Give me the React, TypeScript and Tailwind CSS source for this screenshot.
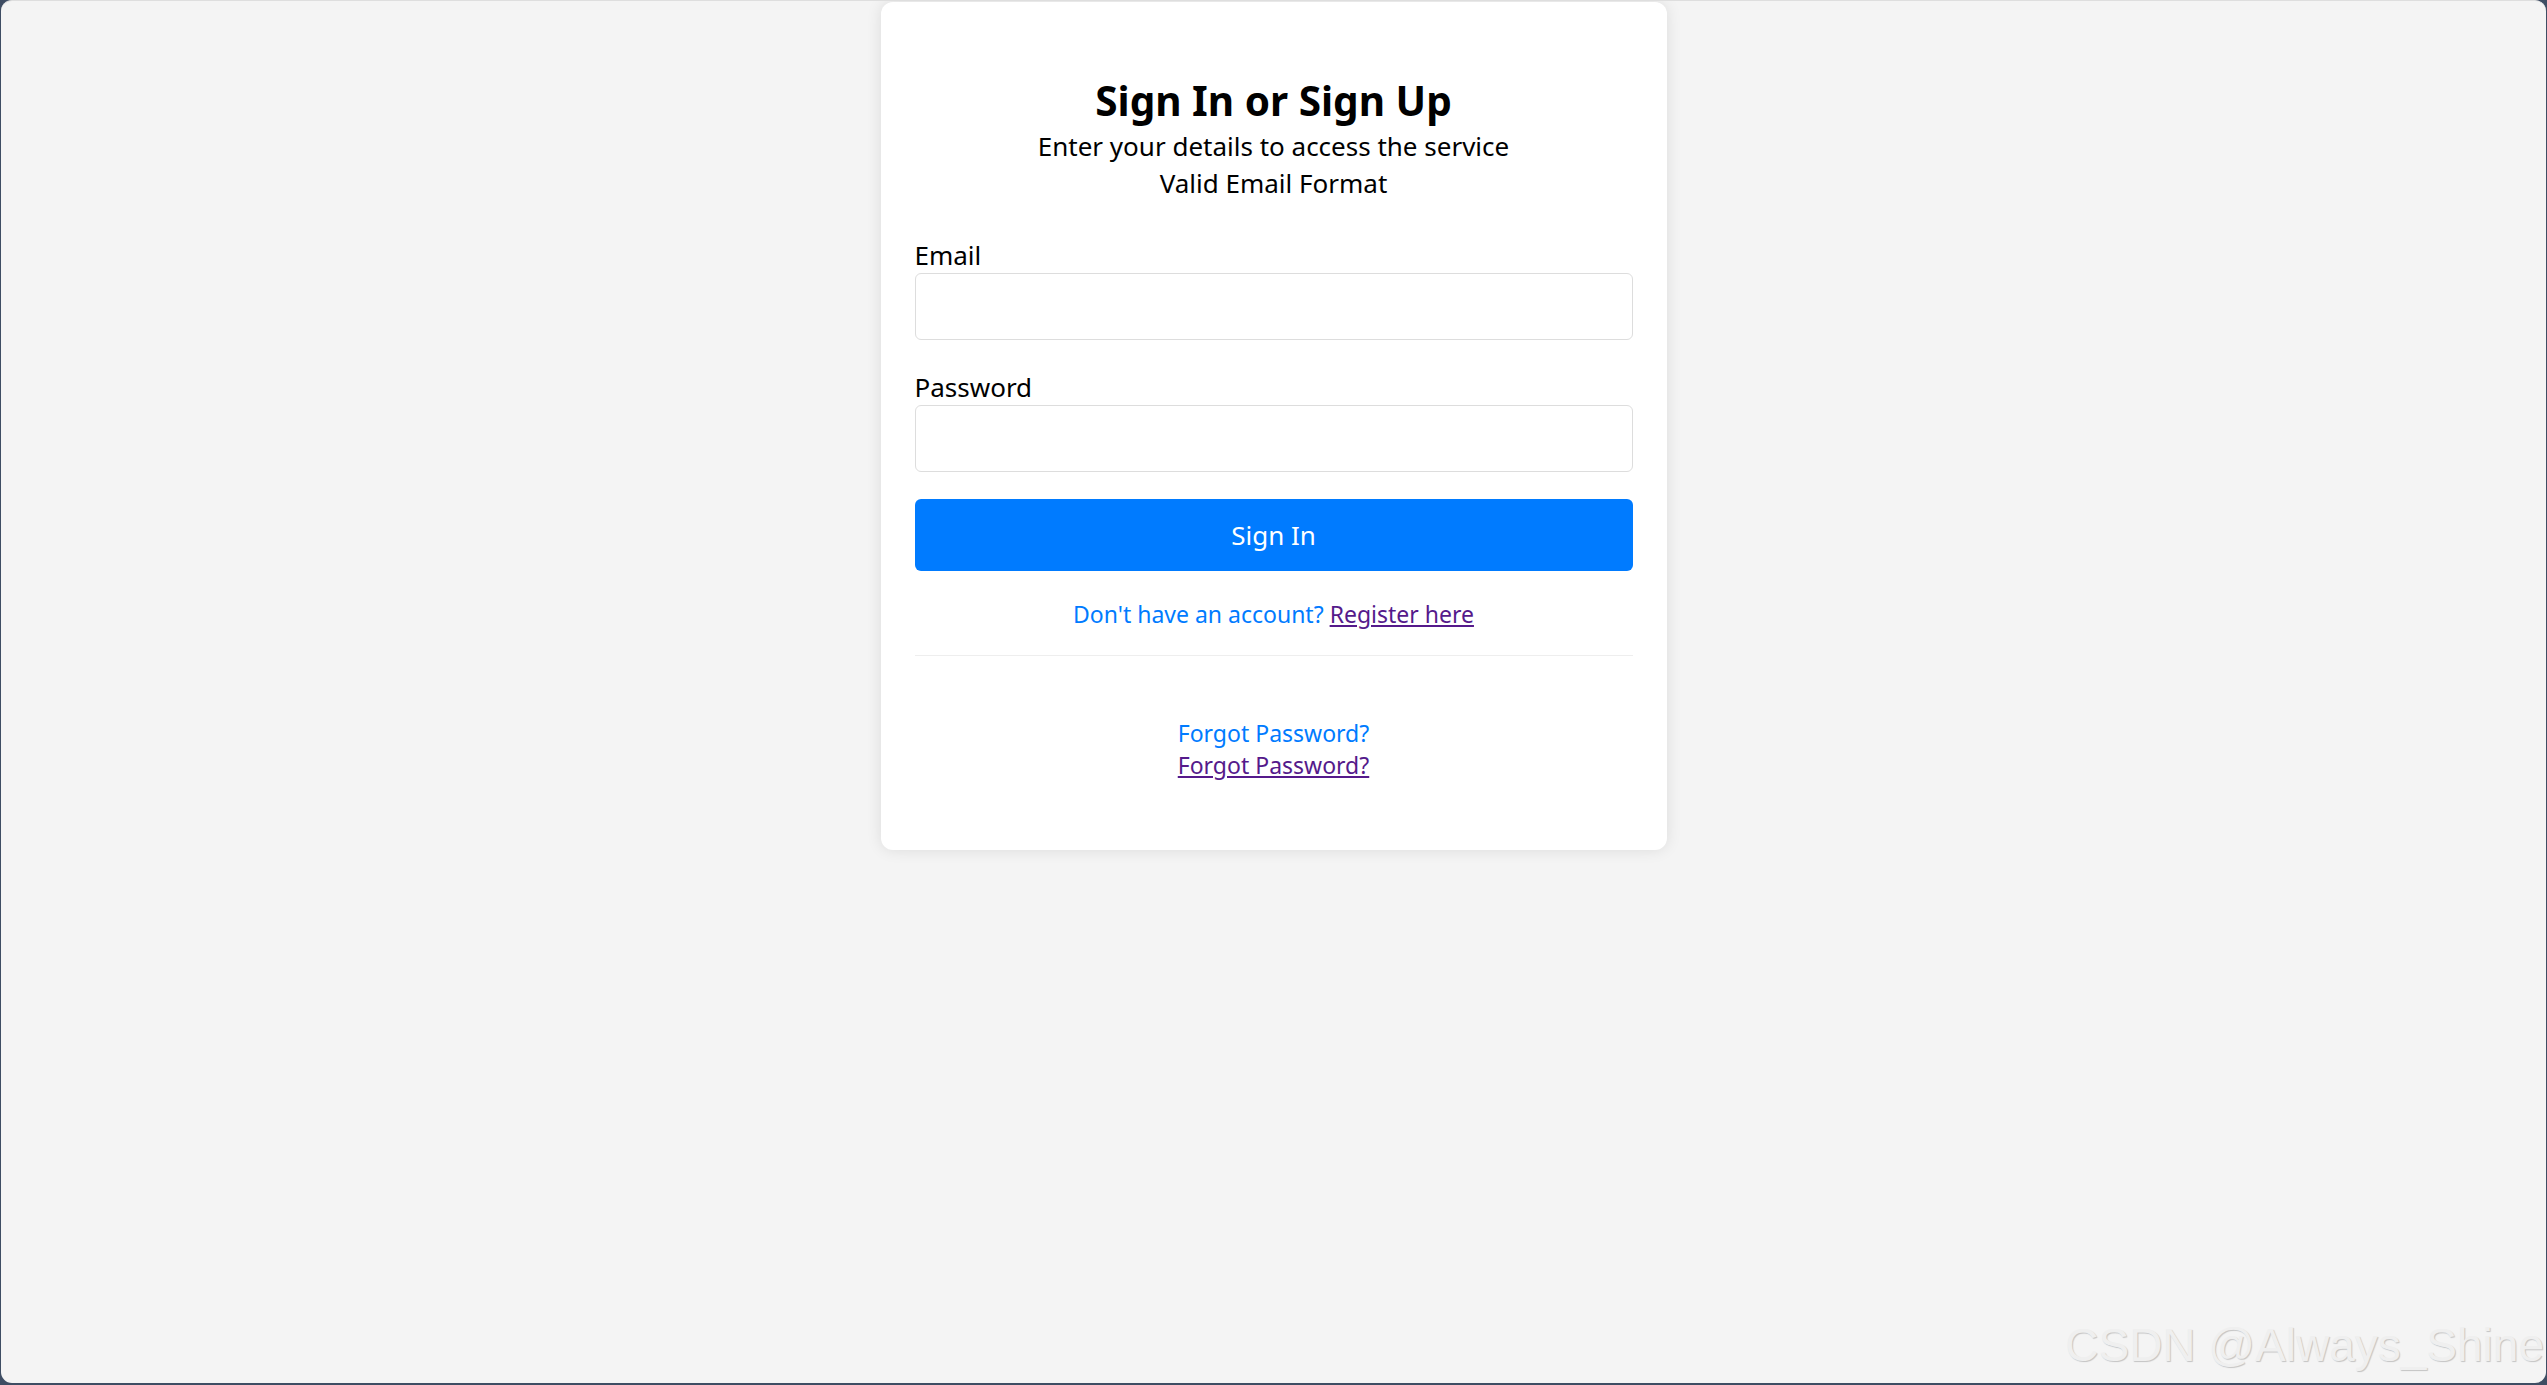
import React from "react";

export default function App() {
  const f = { fontFamily: '"Noto Sans", "Open Sans", sans-serif' };
  return (
    <div className="w-full h-[1385px] bg-[#3e4d63] px-[1px] pb-[2px] overflow-hidden">
      <div className="relative w-full h-full rounded-[11px] bg-[#f4f4f4] border-t border-[#dedede] overflow-hidden" style={f}>
        <div className="mx-auto mt-[1px] w-[786px] bg-white rounded-[12px] shadow-[0_0_15px_rgba(0,0,0,0.1)] pt-[77px] pb-[69px] px-[34px] text-center">
          <h2 className="text-[40.5px] leading-[43px] font-bold text-black">Sign In or Sign Up</h2>
          <p className="text-[26px] leading-[37px] text-black mt-[6px]">Enter your details to access the service</p>
          <p className="text-[26px] leading-[37px] text-black">Valid Email Format</p>
          <div className="text-left mt-[35px]">
            <label className="block text-[26px] leading-[36px] text-black">Email</label>
            <input type="email" className="block w-full h-[67px] border border-[#dddddd] rounded-[6px] bg-white outline-none px-3" />
          </div>
          <div className="text-left mt-[29px]">
            <label className="block text-[26px] leading-[36px] text-black">Password</label>
            <input type="password" className="block w-full h-[67px] border border-[#dddddd] rounded-[6px] bg-white outline-none px-3" />
          </div>
          <button className="mt-[27px] w-full h-[72px] rounded-[6px] bg-[#007bff] text-white text-[26px]">Sign In</button>
          <p className="mt-[25px] text-[23px] leading-[36px] text-[#007bff]">
            Don't have an account? <a href="#" className="text-[#551a8b] underline">Register here</a>
          </p>
          <div className="mt-[23px] h-px bg-[#eeeeee]" />
          <div className="mt-[61px] text-[23px] leading-[32px]">
            <p className="text-[#007bff]">Forgot Password?</p>
            <a href="#" className="text-[#551a8b] underline">Forgot Password?</a>
          </div>
        </div>
        <div
          className="absolute right-[2px] bottom-[15px] text-[46px] leading-none text-[#efefef] select-none"
          style={{ fontFamily: '"Liberation Sans", Arial, sans-serif', textShadow: "1px 1px 1px rgba(0,0,0,0.2)" }}
        >
          CSDN @Always_Shine
        </div>
      </div>
    </div>
  );
}
